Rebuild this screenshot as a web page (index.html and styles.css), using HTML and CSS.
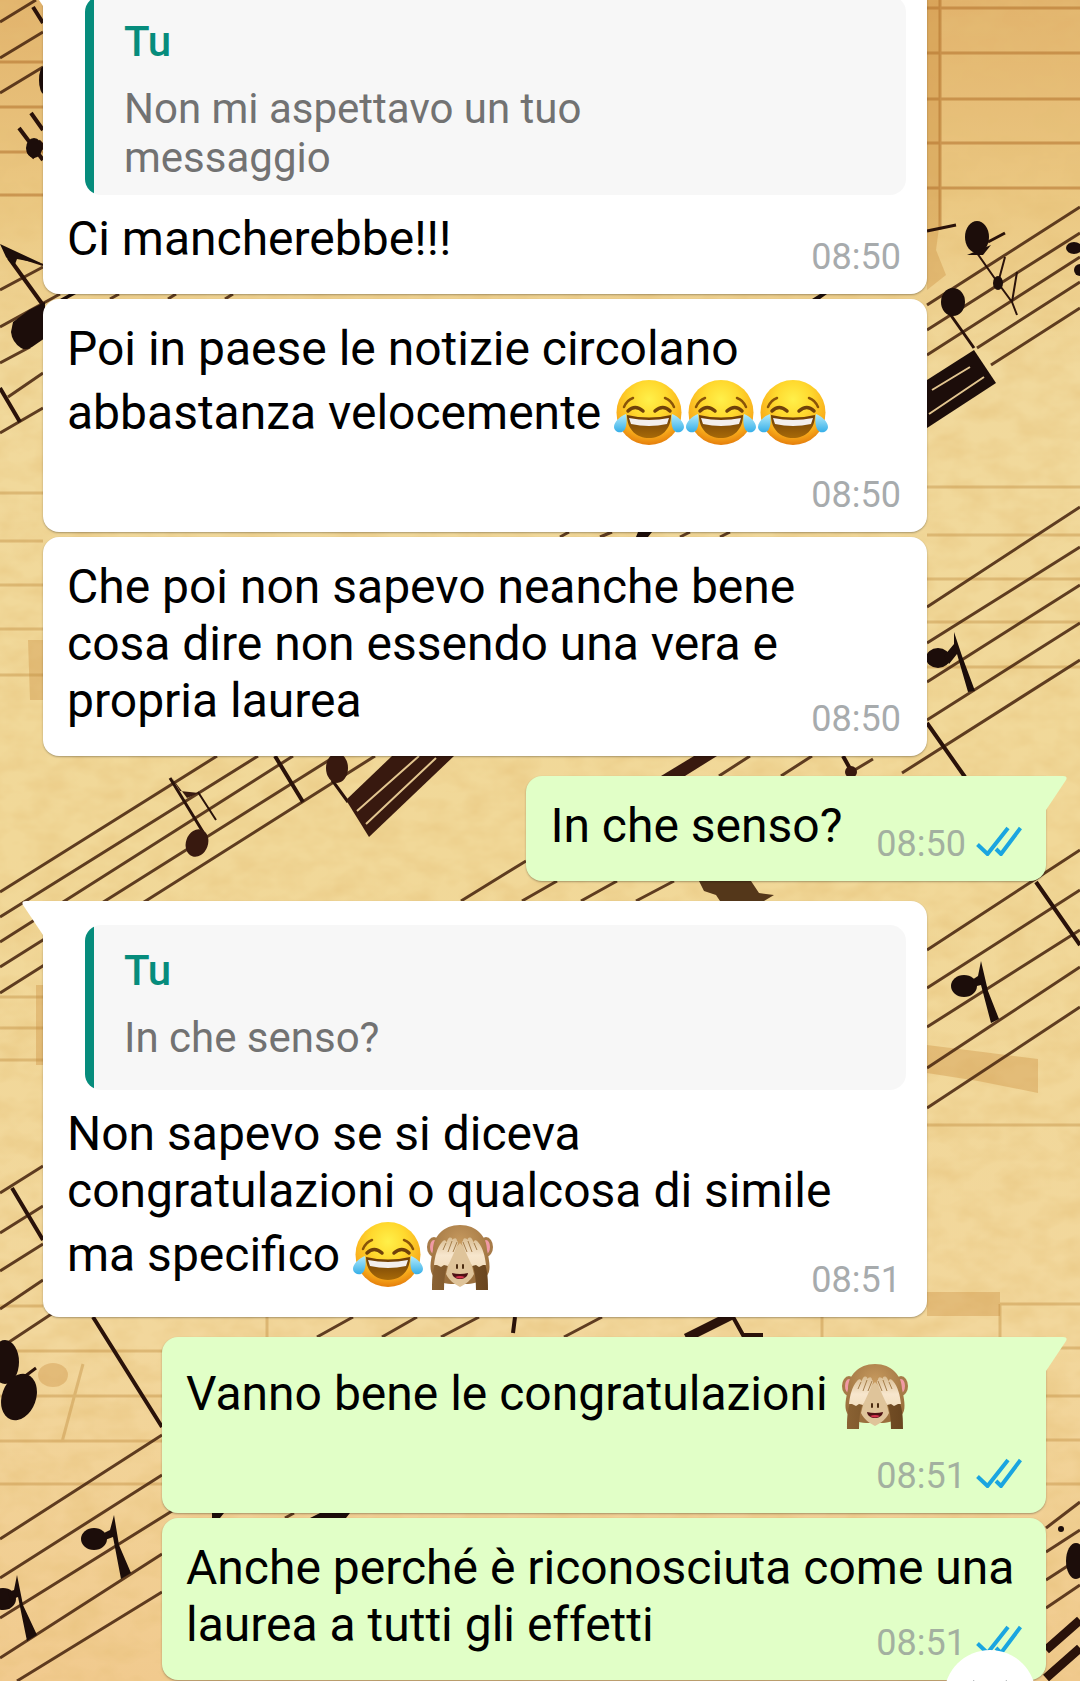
FILE: index.html
```html
<!DOCTYPE html>
<html lang="it">
<head>
<meta charset="utf-8">
<meta name="viewport" content="width=device-width, initial-scale=1">
<title>Chat</title>
<link rel="stylesheet" href="styles.css">
</head>
<body>
<svg class="symbols" aria-hidden="true">
  <defs>
    <radialGradient id="face" cx=".5" cy=".3" r=".7">
      <stop offset="0" stop-color="#fff04a"/><stop offset=".4" stop-color="#ffd92e"/><stop offset=".78" stop-color="#f9ae1c"/><stop offset="1" stop-color="#e57e0c"/>
    </radialGradient>
    <linearGradient id="mouth" x1="0" y1="0" x2="0" y2="1">
      <stop offset="0" stop-color="#6b3c06"/><stop offset="1" stop-color="#a86a08"/>
    </linearGradient>
    <linearGradient id="tear" x1="0" y1="0" x2="0" y2="1">
      <stop offset="0" stop-color="#b5ecfb"/><stop offset="1" stop-color="#35aee8"/>
    </linearGradient>
    <radialGradient id="fur" cx=".5" cy=".3" r=".65">
      <stop offset="0" stop-color="#c79a5f"/><stop offset="1" stop-color="#9a6f3d"/>
    </radialGradient>
    <linearGradient id="hand" x1="0" y1="0" x2="0" y2="1">
      <stop offset="0" stop-color="#d9bd92"/><stop offset=".6" stop-color="#f7e6cd"/><stop offset="1" stop-color="#f3dfc0"/>
    </linearGradient>
    <linearGradient id="arm" x1="0" y1="0" x2="1" y2="0">
      <stop offset="0" stop-color="#8a6233"/><stop offset="1" stop-color="#69451f"/>
    </linearGradient>
    <symbol id="joy" viewBox="0 0 72 71">
      <circle cx="36" cy="35.500" r="32.500" fill="url(#face)"/>
      <path d="M11 30q3-7 9-9M61 30q-3-7-9-9" fill="none" stroke="#8a5408" stroke-width="2.500" stroke-linecap="round"/>
      <path d="M15 34q7-7 15 0M42 34q8-7 15 0" fill="none" stroke="#70420a" stroke-width="3.500" stroke-linecap="round"/>
      <path d="M14 38q22 5 44 0c0 15-10 23-22 23s-22-8-22-23z" fill="url(#mouth)"/>
      <path d="M16 41q20 4 40 0l-2 6q-18 4-36 0z" fill="#f3eeec"/>
      <path d="M13 37c-6 2-12 8-12 13s8 8 11 2c2-4 2-10 1-15zM59 37c6 2 12 8 12 13s-8 8-11 2c-2-4-2-10-1-15z" fill="url(#tear)"/>
    </symbol>
    <symbol id="monkey" viewBox="0 0 72 71">
      <ellipse cx="10" cy="28" rx="7" ry="10" fill="#a77b49"/><ellipse cx="62" cy="28" rx="7" ry="10" fill="#a77b49"/>
      <ellipse cx="10" cy="28" rx="4" ry="7" fill="#f09aa5"/><ellipse cx="62" cy="28" rx="4" ry="7" fill="#f09aa5"/>
      <path d="M36 6c17 0 27 12 27 25 2 9 4 19 1 24-3 6-14 10-20 10H27C19 65 10 60 8 55c-3-6-1-15 1-24C9 18 19 6 36 6z" fill="url(#fur)"/>
      <path d="M36 24c7 6 11 18 14 31-3 6-8 10-14 13-6-3-11-7-14-13 3-13 7-25 14-31z" fill="#dfc49a"/>
      <path d="M8 72c0-10 0-18 3-27h13c-3 7-4 16-4 27zM64 72c0-10 0-18-3-27H48c3 7 4 16 4 27z" fill="url(#arm)"/>
      <path d="M10 46c1-9 3-17 8-23 2-3 5-2 4 1l2-4c2-3 5-1 4 1l1-1c3-2 4 0 4 2 2 1 1 3 0 5-3 7-6 13-9 20l-4-1-3 2-4-2z" fill="url(#hand)"/>
      <path d="M62 46c-1-9-3-17-8-23-2-3-5-2-4 1l-2-4c-2-3-5-1-4 1l-1-1c-3-2-4 0-4 2-2 1-1 3 0 5 3 7 6 13 9 20l4-1 3 2 4-2z" fill="url(#hand)"/>
      <path d="M19 31l3-7M24 33l4-11M29 33l4-10M53 31l-3-7M48 33l-4-11M43 33l-4-10" stroke="#a67f4c" fill="none"/>
      <path d="M33 46v3M39 46v3" stroke="#4a2b10" stroke-width="2" stroke-linecap="round"/>
      <path d="M28 54q8 2 16 0c-1 8-15 8-16 0z" fill="#4d1115"/><path d="M31 58q5-2 10 0-5 3-10 0z" fill="#d6344f"/>
    </symbol>
    <symbol id="ticks" viewBox="0 0 46 30">
      <path d="M1.500 18.500l10 9.500L32 2M20 23l5 5L44.500 2" fill="none" stroke="#1aa5e0" stroke-width="4"/>
    </symbol>
  </defs>
</svg>

<svg class="wallpaper" viewBox="0 0 1080 1681" preserveAspectRatio="xMidYMin slice" aria-hidden="true">
  <defs>
    <linearGradient id="paper" x1="0" y1="0" x2="0" y2="1">
      <stop offset="0" stop-color="#e2b36c"/><stop offset=".12" stop-color="#ebc882"/><stop offset=".22" stop-color="#f1d99c"/><stop offset=".5" stop-color="#f1d898"/><stop offset=".8" stop-color="#f2d79c"/><stop offset="1" stop-color="#f1ca8e"/>
    </linearGradient>
    <filter id="fibres" x="0" y="0" width="1" height="1">
      <feTurbulence type="fractalNoise" baseFrequency=".03 .05" numOctaves="3" seed="4"/>
      <feColorMatrix values="0 0 0 0 .78  0 0 0 0 .52  0 0 0 0 .18  .8 0 0 0 -.28"/>
    </filter>
  </defs>
  <rect width="1080" height="1681" fill="url(#paper)"/>
  <rect width="1080" height="1681" filter="url(#fibres)"/>
  <!-- show-through of the reverse page -->
  <g fill="#c98a3a" opacity=".35">
    <path d="M927 0h13v220l-4 30 10 25-19 15zM927 1045l48 6 63 8v34l-60-12-51-8zM927 1292h73v24h-73zM36 985h8v80h-8zM28 640h16v60H30z"/>
    <ellipse cx="53" cy="1375" rx="15" ry="12"/>
  </g>
  <g fill="none" stroke="#b0702a" stroke-width="3" opacity=".55">
    <path d="M927 8h153M927 53h153M927 99h153M927 143h153M927 188h153M940 0v230"/>
    <path d="M0 62h43M0 107h43M0 152h43M0 195h43"/>
  </g>
  <g fill="none" stroke="#bf8a3c" stroke-width="3" opacity=".4">
    <path d="M0 493h43M0 541h43M0 585h43M0 629h43M0 675h43M927 487h153M927 535h153M927 579h153M927 622h153M927 667h153"/>
    <path d="M0 997h43M0 1028h43M0 1060h43M927 1125h153M1000 1304h80M1046 1348h34M1046 1396h34M1046 1440h34M1046 1484h34"/>
    <path d="M0 1306h43M0 1351h162M0 1396h162M0 1441h162M0 1484h162M267 1317v20M822 1317v20M1000 1304v33M83 1364l-21 78"/>
  </g>
  <!-- staves -->
  <g fill="none" stroke="#4a2710" stroke-width="3" opacity=".88">
    <path d="M0 22L36 0M0 58l43-26M0 93l43-26M0 290l43-23M0 327l60-33M0 363l30-16M8 397l35-24M0 433l43-25"/>
    <path d="M927 305l153-98M927 330l153-97M927 355l153-98M977 348l103-66M991 365l89-57"/>
    <path d="M927 607l153-100M927 643l153-96M927 682l153-97M927 720l153-97M902 773l178-113"/>
    <path d="M0 892l217-136M0 917l258-161M0 942l293-186M0 967l334-210M0 993l375-237"/>
    <path d="M461 901l65-40M522 901l35-20M581 901l36-20M636 901l38-20M719 776l31-20M781 776l31-20M853 771l20-12"/>
    <path d="M927 950l153-100M927 988l153-98M927 1027l153-97M927 1068l153-101M927 1108l153-101"/>
    <path d="M0 1193l43-27M0 1233l43-27M0 1271l43-27M0 1309l43-29M0 1348l56-37"/>
    <path d="M0 1539l162-104M0 1578l162-103M0 1618l172-107M0 1658l162-104M17 1681l145-89"/>
    <path d="M317 1337l36-20M382 1337l35-20M441 1337l38-20M564 1337l38-20M110 299l9-5M168 299l8-5M225 299l8-5M560 537l9-5M600 537l12-5M680 537l10-5M720 537l10-5M285 1518l9-5"/>
    <path d="M1046 1528l34-26M1046 1552l34-22M1046 1580l34-22M1046 1608l34-23"/>
  </g>
  <!-- bar lines, stems and flags -->
  <g fill="none" stroke="#2a120a" stroke-width="4">
    <path d="M33 7l10 16M19 128l24 32M31 113l12 17M9 258l34 47M0 388l20 34M927 723l38 54M275 756l28 46M1036 882l44 63M12 1188l31 52M93 1317l69 110M515 1317l-2 16M733 1317l10 18h20M843 756l10 18"/>
    <path d="M927 231l29-6M988 242l17-9M170 778l33 54M332 780l16 22M950 314l24 34M20 1380l16-12" stroke-width="3"/>
    <path d="M977 253l21 30 7-26M998 283l14 19 5-30M1012 302l5 13M198 792l18 28M12 255l31 10" stroke-width="2"/>
    <path d="M30 156l13-13M686 1338l46-23M1046 1650l34-30M1046 1678l34-30" stroke-width="9"/>
  </g>
  <g fill="#1c0d0a">
    <ellipse cx="44" cy="80" rx="5" ry="14"/><ellipse cx="34" cy="148" rx="8" ry="10"/>
    <path d="M0 244l43 20-26-5-3 8-8-10z"/>
    <path d="M13 322l16-12 16-8v36l-13 9q-6 4-11 1-9-6-10-16z"/>
    <ellipse cx="977" cy="237" rx="12" ry="16"/><path d="M967 255l24-10-8 10z"/>
    <ellipse cx="953" cy="302" rx="12" ry="14"/><ellipse cx="998" cy="283" rx="5" ry="7"/>
    <ellipse cx="1074" cy="248" rx="8" ry="6"/><circle cx="1080" cy="270" r="6"/>
    <path d="M927 380l47-30 22 33-69 45z"/>
    <ellipse cx="938" cy="658" rx="12" ry="10"/><path d="M944 656l10-12v-12l8 24 13 35-7 1-11-38-8 10z"/>
    <ellipse cx="964" cy="986" rx="13" ry="11"/><path d="M972 980l6-4 3-15 7 30 11 28-8 4-10-38-8 2z"/>
    <ellipse cx="5" cy="1362" rx="14" ry="22"/><ellipse cx="19" cy="1397" rx="17" ry="24" transform="rotate(20 19 1397)"/>
    <ellipse cx="94" cy="1539" rx="13" ry="11"/><path d="M102 1534l8-4 4-15 5 30 12 28-10 6-8-42-8 3z"/>
    <ellipse cx="3" cy="1599" rx="13" ry="11"/><path d="M8 1592l6-2 3-15 6 30 14 30-10 6-9-44-8 3z"/>
    <circle cx="1061" cy="1529" r="3"/><ellipse cx="1076" cy="1561" rx="10" ry="18"/>
    <path d="M60 299l9-5h7l-9 5zM812 299l8-5h7l-7 5zM636 537l2-5h14l-4 5zM212 1518v-5h12l-4 5zM310 1518l10-5h30l-4 5z"/>
  </g>
  <g fill="#38190f">
    <ellipse cx="197" cy="843" rx="11" ry="14" transform="rotate(20 197 843)"/><path d="M172 778l8 13 19 2-12 5z"/>
    <ellipse cx="337" cy="768" rx="11" ry="15"/>
    <path d="M392 756h62l-85 81-23-37z"/><path d="M661 776l33-20h23l-32 20z"/>
    <path d="M699 881h52l8 12 15 2-10 6h-44l-4-6-12-4z" fill="#54371a"/>
    <circle cx="851" cy="772" r="6"/>
  </g>
  <path d="M932 390l38-23M929 414l55-37M357 811l62-55M366 824l70-66" fill="none" stroke="#e3c690" stroke-width="2"/>
</svg>

<main class="chat">
  <ol class="thread">
    <li class="bubble received has-tail cut">
      <svg class="tail" viewBox="0 0 21 34" aria-hidden="true"><path d="M21 0H4Q-1 0 1 4L21 34z"/></svg>
      <blockquote class="quote">
        <cite class="quote-author">Tu</cite>
        <p class="quote-text">Non mi aspettavo un tuo<br>messaggio</p>
      </blockquote>
      <div class="body"><p class="text">Ci mancherebbe!!!</p><div class="meta"><time>08:50</time></div></div>
    </li>
    <li class="bubble received">
      <div class="body stacked">
        <p class="text">Poi in paese le notizie circolano abbastanza velocemente <svg class="emoji" role="img" aria-label="😂"><use href="#joy"/></svg><svg class="emoji" role="img" aria-label="😂"><use href="#joy"/></svg><svg class="emoji" role="img" aria-label="😂"><use href="#joy"/></svg></p>
        <div class="meta"><time>08:50</time></div>
      </div>
    </li>
    <li class="bubble received">
      <div class="body"><p class="text">Che poi non sapevo neanche bene<br>cosa dire non essendo una vera e<br>propria laurea</p><div class="meta"><time>08:50</time></div></div>
    </li>
    <li class="bubble sent has-tail short">
      <svg class="tail" viewBox="0 0 21 34" aria-hidden="true"><path d="M0 0H17Q22 0 20 4L0 34z"/></svg>
      <div class="body inline"><p class="text">In che senso?</p><div class="meta"><time>08:50</time><svg class="ticks" role="img" aria-label="Letto"><use href="#ticks"/></svg></div></div>
    </li>
    <li class="bubble received has-tail">
      <svg class="tail" viewBox="0 0 21 34" aria-hidden="true"><path d="M21 0H4Q-1 0 1 4L21 34z"/></svg>
      <blockquote class="quote">
        <cite class="quote-author">Tu</cite>
        <p class="quote-text">In che senso?</p>
      </blockquote>
      <div class="body"><p class="text">Non sapevo se si diceva<br>congratulazioni o qualcosa di simile<br>ma specifico <svg class="emoji" role="img" aria-label="😂"><use href="#joy"/></svg><svg class="emoji" role="img" aria-label="🙈"><use href="#monkey"/></svg></p><div class="meta"><time>08:51</time></div></div>
    </li>
    <li class="bubble sent has-tail">
      <svg class="tail" viewBox="0 0 21 34" aria-hidden="true"><path d="M0 0H17Q22 0 20 4L0 34z"/></svg>
      <div class="body stacked">
        <p class="text">Vanno bene le congratulazioni <svg class="emoji" role="img" aria-label="🙈"><use href="#monkey"/></svg></p>
        <div class="meta"><time>08:51</time><svg class="ticks" role="img" aria-label="Letto"><use href="#ticks"/></svg></div>
      </div>
    </li>
    <li class="bubble sent">
      <div class="body"><p class="text">Anche perché è riconosciuta come una<br>laurea a tutti gli effetti</p><div class="meta"><time>08:51</time><svg class="ticks" role="img" aria-label="Letto"><use href="#ticks"/></svg></div></div>
    </li>
  </ol>
</main>
<button class="to-latest" type="button" aria-label="Vai all'ultimo messaggio">
  <svg viewBox="0 0 92 92" aria-hidden="true"><path d="M28 32l18 17 18-17M28 49l18 17 18-17" fill="none" stroke="#6b7377" stroke-width="5"/></svg>
</button>
</body>
</html>
```
FILE: styles.css
```css
* {
  box-sizing: border-box;
}

body {
  margin: 0;
  position: relative;
  min-height: 100vh;
  overflow-x: hidden;
  background: #eed494;
  color: #000;
  font-family: Roboto, "Liberation Sans", sans-serif;
  font-size: 48px;
  line-height: 57px;
}

p,
blockquote {
  margin: 0;
}

.symbols {
  position: absolute;
  width: 0;
  height: 0;
}

.wallpaper {
  position: absolute;
  inset: 0;
  z-index: -1;
  width: 100%;
  height: 100%;
}

.thread {
  display: flex;
  flex-direction: column;
  gap: 5px;
  margin: 0;
  padding: 0 34px 1px 43px;
  list-style: none;
}

.bubble {
  position: relative;
  padding: 21px 24px 15px;
  border-radius: 16px;
  box-shadow: 0 1px 2px rgba(0, 0, 0, 0.3);
}

.received {
  margin-right: 119px;
  background: #fff;
}

.sent {
  margin-left: 119px;
  background: #e1ffc7;
}

.short {
  align-self: flex-end;
}

.has-tail {
  margin-top: 15px;
}

.received.has-tail {
  border-top-left-radius: 0;
}

.sent.has-tail {
  border-top-right-radius: 0;
}

/* The thread is scrolled part of the way into its first message. */
.cut {
  margin-top: -28px;
}

.tail {
  position: absolute;
  top: 0;
  width: 21px;
  height: 34px;
}

.received .tail {
  right: 100%;
  fill: #fff;
}

.sent .tail {
  left: 100%;
  fill: #e1ffc7;
}

.quote {
  min-height: 165px;
  margin: 3px -3px 15px 18px;
  padding: 21px 39px 13px;
  border-radius: 16px;
  background: linear-gradient(to right, #068c7c 9px, #f7f7f7 9px);
  color: #727272;
  font-size: 42px;
  line-height: 49px;
}

.quote-author {
  display: block;
  margin-bottom: 18px;
  color: #068c7c;
  font-style: normal;
  font-weight: 500;
}

.body {
  display: grid;
}

.text,
.meta {
  grid-area: 1 / 1;
}

.text {
  margin-bottom: 12px;
}

.meta {
  display: flex;
  align-items: baseline;
  align-self: end;
  justify-self: end;
  gap: 10px;
  padding-right: 2px;
  color: #a7abad;
  font-size: 36px;
  line-height: 43px;
}

.sent .meta {
  padding-right: 0;
  color: #a3b0a0;
}

.stacked,
.inline {
  display: flex;
}

.stacked {
  flex-direction: column;
  gap: 14px;
}

.stacked .meta {
  align-self: flex-end;
}

.inline {
  gap: 34px;
}

.inline .meta {
  align-self: flex-end;
}

.emoji {
  width: 72px;
  height: 71px;
  vertical-align: -19px;
}

.ticks {
  width: 46px;
  height: 30px;
}

.to-latest {
  position: fixed;
  right: 44px;
  bottom: -61px;
  width: 92px;
  height: 92px;
  padding: 0;
  border: 0;
  border-radius: 50%;
  background: #fff;
}

.to-latest svg {
  display: block;
}
```
